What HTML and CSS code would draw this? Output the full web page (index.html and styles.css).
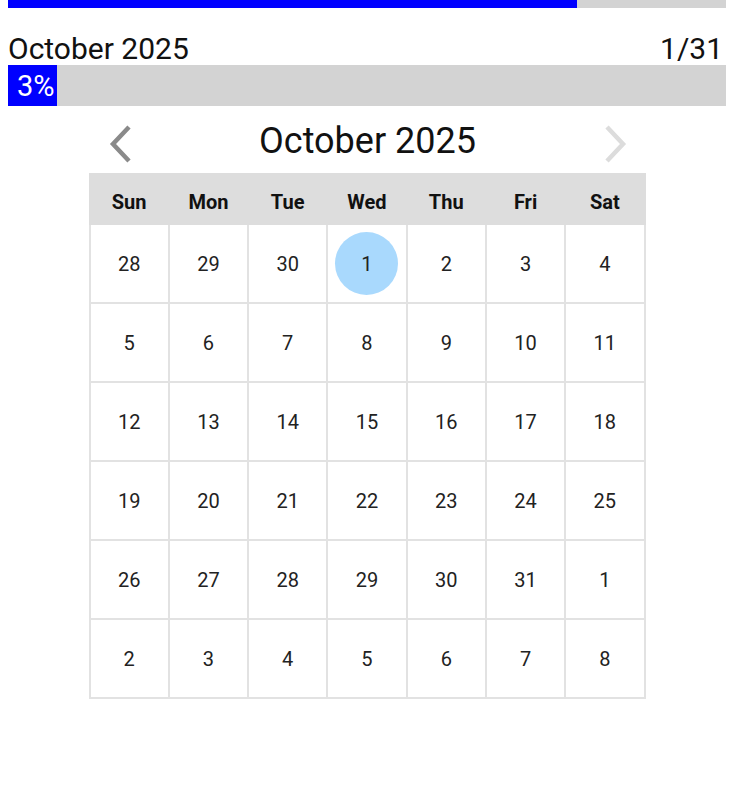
FILE: index.html
```html
<!DOCTYPE html>
<html lang="en">
<head>
<meta charset="UTF-8">
<meta name="viewport" content="width=device-width, initial-scale=1.0">
<title>October 2025</title>
<link rel="stylesheet" href="styles.css">
</head>
<body>
<div class="topbar"><div class="topbar-fill" style="width:79.3%"></div></div>

<div class="info">
    <span>October 2025</span>
    <span>1/31</span>
</div>
<div class="progress"><div class="progress-fill" style="width:49px">3%</div></div>

<div class="cal">
    <div class="cal-nav">
        <svg class="arrow prev" width="24" height="40" viewBox="0 0 24 40"><polyline points="20,3 4,20 20,37" fill="none" stroke="#8a8a8a" stroke-width="4.5"/></svg>
        <div class="cal-title">October 2025</div>
        <svg class="arrow next" width="24" height="40" viewBox="0 0 24 40"><polyline points="4,3 20,20 4,37" fill="none" stroke="#dcdcdc" stroke-width="4.5"/></svg>
    </div>
    <table>
        <thead>
            <tr><th>Sun</th><th>Mon</th><th>Tue</th><th>Wed</th><th>Thu</th><th>Fri</th><th>Sat</th></tr>
        </thead>
        <tbody id="days"></tbody>
    </table>
</div>

<script>
const days=[28,29,30];
for(let d=1;d<=31;d++) days.push(d);
for(let d=1;days.length<42;d++) days.push(d);
let html='';
for(let r=0;r<6;r++){
    html+='<tr>';
    for(let c=0;c<7;c++){
        const i=r*7+c, v=days[i];
        html+= i===3 ? `<td><span class="today">${v}</span></td>` : `<td>${v}</td>`;
    }
    html+='</tr>';
}
document.getElementById('days').innerHTML=html;
</script>
</body>
</html>
```

FILE: styles.css
```css
body {margin:0 8px;padding:0;font-family:Roboto,"Liberation Sans",Arial,sans-serif;background:#fff;color:#111;}
.topbar {height:8px;background:#d3d3d3;}
.topbar-fill {height:100%;background:#0000ff;}
.info {display:flex;justify-content:space-between;align-items:flex-end;height:57px;font-size:30px;line-height:32px;padding-right:3px;}
.progress {height:41px;background:#d3d3d3;}
.progress-fill {height:100%;background:#0000ff;color:#fff;font-size:29px;line-height:43px;box-sizing:border-box;padding-left:9px;}
.cal {width:557px;margin:0 auto;}
.cal-nav {display:flex;justify-content:space-between;align-items:center;height:67px;padding:0 19px 0 20px;}
.arrow {display:block;margin-top:8px;}
.cal-title {font-size:36px;color:#111;margin-top:2px;}
table {width:100%;border-collapse:collapse;table-layout:fixed;}
th {background:#dddddd;height:50px;font-size:20px;font-weight:bold;padding:6px 0 0;box-sizing:border-box;border:2px solid #dddddd;}
td {height:77px;text-align:center;font-size:20px;color:#222;border:2px solid #e2e2e2;padding:0;}
.today {display:inline-flex;align-items:center;justify-content:center;width:63px;height:63px;border-radius:50%;background:#a9d9fd;}
```
